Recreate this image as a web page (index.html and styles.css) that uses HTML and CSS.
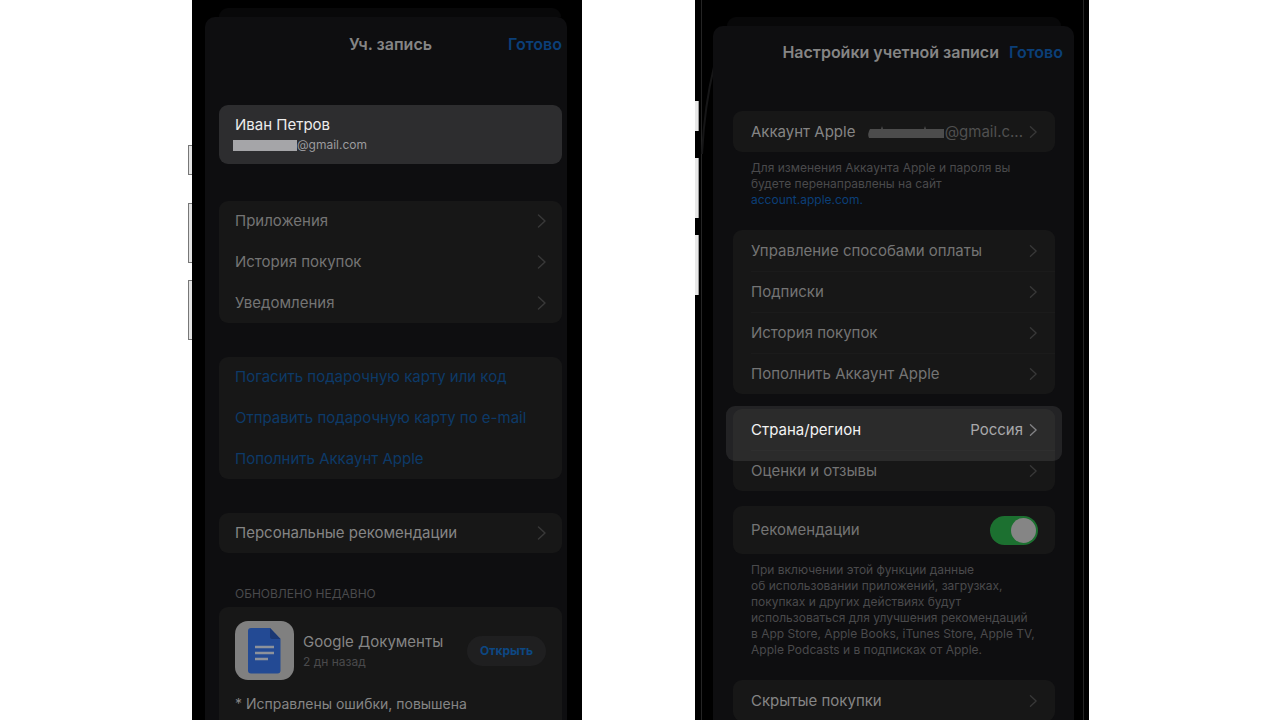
FILE: index.html
```html
<!DOCTYPE html>
<html lang="ru">
<head>
<meta charset="utf-8">
<meta name="viewport" content="width=device-width, initial-scale=1">
<title>Учетная запись</title>
<link rel="stylesheet" href="styles.css">
</head>
<body>
<svg class="defs" aria-hidden="true"><symbol id="chevron" viewBox="0 0 10 16"><path d="M1.500 2 8 8l-6.500 6" fill="none" stroke="currentColor" stroke-width="1.500" stroke-linecap="round" stroke-linejoin="round"/></symbol></svg>
<main class="stage">
  <section class="phone phone-account">
    <i class="side side-mute"></i><i class="side side-up"></i><i class="side side-down"></i>
    <div class="sheet-back"></div>
    <div class="sheet">
      <header class="bar">
        <h1 class="title">Уч. запись</h1>
        <button class="done">Готово</button>
      </header>
      <button class="profile">
        <span class="profile-name">Иван Петров</span>
        <span class="profile-mail"><i class="mask"></i>@gmail.com</span>
      </button>
      <div class="card">
        <button class="row"><span>Приложения</span><svg class="chev"><use href="#chevron"/></svg></button>
        <button class="row"><span>История покупок</span><svg class="chev"><use href="#chevron"/></svg></button>
        <button class="row"><span>Уведомления</span><svg class="chev"><use href="#chevron"/></svg></button>
      </div>
      <div class="card">
        <button class="row row-link">Погасить подарочную карту или код</button>
        <button class="row row-link">Отправить подарочную карту по e-mail</button>
        <button class="row row-link">Пополнить Аккаунт Apple</button>
      </div>
      <div class="card">
        <button class="row row-bright"><span>Персональные рекомендации</span><svg class="chev"><use href="#chevron"/></svg></button>
      </div>
      <h2 class="section">ОБНОВЛЕНО НЕДАВНО</h2>
      <div class="card card-update">
        <div class="app">
          <svg class="app-icon" viewBox="0 0 59 59" aria-hidden="true">
            <rect width="59" height="59" rx="13" fill="#808080"/>
            <path d="M16 7h19l10.500 11v31.500a3 3 0 0 1-3 3H16a3 3 0 0 1-3-3V10a3 3 0 0 1 3-3z" fill="#234a94"/>
            <path d="M35 7l10.500 11H37a2 2 0 0 1-2-2z" fill="#1b3874"/>
            <path d="M20 26h19M20 32h19M20 38h13" stroke="#8d929b" stroke-width="2.400"/>
          </svg>
          <div class="app-text">
            <span class="app-name">Google Документы</span>
            <span class="app-date">2 дн назад</span>
          </div>
          <button class="open">Открыть</button>
        </div>
        <p class="changes">* Исправлены ошибки, повышена</p>
      </div>
    </div>
  </section>

  <section class="phone phone-settings">
    <i class="side side-mute"></i><i class="side side-up"></i><i class="side side-down"></i>
    <svg class="glint" viewBox="0 0 14 90" aria-hidden="true"><path d="M13 1C7 25 3 50 1 88" fill="none" stroke="#161617" stroke-width="2"/></svg>
    <div class="sheet-back"></div>
    <div class="sheet">
      <header class="bar">
        <h1 class="title">Настройки учетной записи</h1>
        <button class="done">Готово</button>
      </header>
      <div class="card">
        <button class="row row-bright"><span>Аккаунт Apple</span><span class="value value-mail"><svg class="scribble" viewBox="0 0 78 14" aria-hidden="true"><path d="M3 4h11l1-3 1 3h41l1-3 1 3h18v9H2Q0 9 3 4z" fill="#4c4c4c"/></svg>@gmail.c...</span><svg class="chev"><use href="#chevron"/></svg></button>
      </div>
      <p class="note">Для изменения Аккаунта Apple и пароля вы<br>будете перенаправлены на сайт<br><a class="link" href="#account">account.apple.com.</a></p>
      <div class="card">
        <button class="row"><span>Управление способами оплаты</span><svg class="chev"><use href="#chevron"/></svg></button>
        <button class="row"><span>Подписки</span><svg class="chev"><use href="#chevron"/></svg></button>
        <button class="row"><span>История покупок</span><svg class="chev"><use href="#chevron"/></svg></button>
        <button class="row"><span>Пополнить Аккаунт Apple</span><svg class="chev"><use href="#chevron"/></svg></button>
      </div>
      <div class="card">
        <button class="row row-active"><span>Страна/регион</span><span class="value">Россия</span><svg class="chev"><use href="#chevron"/></svg></button>
        <button class="row"><span>Оценки и отзывы</span><svg class="chev"><use href="#chevron"/></svg></button>
      </div>
      <div class="card">
        <label class="row row-toggle" for="rec"><span>Рекомендации</span><input class="toggle" id="rec" type="checkbox" checked></label>
      </div>
      <p class="note">При включении этой функции данные<br>об использовании приложений, загрузках,<br>покупках и других действиях будут<br>использоваться для улучшения рекомендаций<br>в App Store, Apple Books, iTunes Store, Apple TV,<br>Apple Podcasts и в подписках от Apple.</p>
      <div class="card">
        <button class="row row-bright"><span>Скрытые покупки</span><svg class="chev"><use href="#chevron"/></svg></button>
      </div>
    </div>
  </section>
</main>
</body>
</html>
```

FILE: styles.css
```css
* { box-sizing: border-box; }

body {
  margin: 0;
  background: #fff;
  color: #747474;
  font-family: Inter, "Liberation Sans", sans-serif;
  font-size: 15px;
}

button {
  border: 0;
  padding: 0;
  background: none;
  color: inherit;
  font: inherit;
  text-align: left;
  cursor: pointer;
}

.defs { position: absolute; width: 0; height: 0; }

.stage {
  display: grid;
  grid-template-columns: 192fr 390fr 113fr 394fr 191fr;
  height: 100vh;
  overflow: hidden;
}

.phone {
  position: relative;
  display: flex;
  flex-direction: column;
  background: #000;
}

.phone-account { grid-column: 2; padding: 8px 15px 0 13px; }
.phone-settings { grid-column: 4; padding: 17px 15px 0 18px; }

.phone-settings::before {
  content: "";
  position: absolute;
  inset: 0 5px 0 6px;
  border: solid #242424;
  border-width: 0 1px;
}

.side {
  position: absolute;
  left: -4px;
  width: 4px;
  background: #e4e4e4;
  border: 1px solid #777;
  border-right: 0;
}

.side-mute { top: 145px; height: 30px; }
.side-up { top: 203px; height: 60px; }
.side-down { top: 280px; height: 60px; }

.phone-settings .side { left: 0; background: #e8e8e8; border: 0; border-right: 1px solid #999; }
.phone-settings .side-mute { top: 101px; }
.phone-settings .side-up { top: 158px; }
.phone-settings .side-down { top: 235px; }

.glint { position: absolute; left: 6px; top: 66px; width: 14px; height: 90px; }

.sheet-back {
  height: 9px;
  margin: 0 6px 0 14px;
  border-radius: 9px 9px 0 0;
  background: #080809;
}

.sheet {
  position: relative;
  flex: 1;
  border-radius: 10px 10px 0 0;
  background: #0e0e10;
}

.phone-account .sheet { padding: 0 5px 0 14px; }
.phone-settings .sheet { padding: 0 19px 0 20px; }
.phone-settings .sheet-back { margin: 0 13px 0 14px; }

.bar {
  display: grid;
  grid-template-columns: 1fr auto 1fr;
  align-items: center;
  height: 54px;
}

.title {
  grid-column: 2;
  margin: 0;
  color: #858585;
  font-size: 16px;
  font-weight: 600;
  line-height: 20px;
}

.done {
  justify-self: end;
  color: #0b3f78;
  font-size: 16px;
  font-weight: 600;
}

.phone-settings .bar {
  grid-template-columns: 1fr auto auto;
  gap: 10px;
  height: 52px;
  margin: 0 -8px 33px 0;
}

.profile {
  display: flex;
  flex-direction: column;
  justify-content: center;
  gap: 1px;
  width: 100%;
  height: 59px;
  margin: 34px 0 37px;
  padding: 0 16px;
  border-radius: 9px;
  background: #2d2d2f;
}

.profile-name { color: #ececec; line-height: 20px; }

.profile-mail {
  display: flex;
  align-items: center;
  color: #9b9b9e;
  font-size: 12px;
  line-height: 18px;
}

.mask { width: 64px; height: 11px; margin-left: -2px; background: #a5a5a8; }

.card {
  margin-bottom: 34px;
  border-radius: 9px;
  background: #171717;
}

.phone-settings .card { margin-bottom: 15px; }

.row {
  position: relative;
  display: flex;
  align-items: center;
  width: 100%;
  height: 40px;
  padding: 0 15px 0 16px;
  line-height: 20px;
  white-space: nowrap;
}

.row + .row { height: 41px; }

.phone-settings .row { height: 41px; padding: 0 17px 0 18px; }

.phone-settings .row + .row::before {
  content: "";
  position: absolute;
  inset: 0 0 auto 18px;
  height: 1px;
  background: #1b1b1b;
}

.row-link { color: #0d3a68; }
.row-bright { color: #858585; }

.chev { width: 10px; height: 16px; margin-left: auto; color: #383838; }
.phone-settings .chev { width: 9px; height: 14px; }

.value { margin-left: auto; color: #a0a0a3; }
.value + .chev { margin-left: 6px; }
.value-mail { display: flex; align-items: center; color: #505050; }
.scribble { width: 78px; height: 14px; }

.row-active { color: #f2f2f2; }
.phone-settings .row-active .chev { color: #77777a; }

.row-active::after {
  content: "";
  position: absolute;
  z-index: 1;
  inset: -3px -7px -11px;
  border-radius: 9px;
  background: rgba(255, 255, 255, .09);
  pointer-events: none;
}

.phone-settings .row-toggle { height: 48px; }

.toggle {
  appearance: none;
  width: 48px;
  height: 29px;
  margin: 0 0 0 auto;
  padding: 2px;
  border-radius: 15px;
  background: #1c7030;
}

.toggle::before {
  content: "";
  display: block;
  width: 25px;
  height: 25px;
  margin-left: 19px;
  border-radius: 50%;
  background: #858585;
}

.note {
  margin: -7px 0 22px;
  padding-left: 18px;
  color: #4a4a4c;
  font-size: 12px;
  line-height: 16px;
  white-space: nowrap;
}

.link { color: #0b3f78; text-decoration: none; }

.section {
  margin: -2px 0 4px 16px;
  color: #4a4a4c;
  font-size: 12px;
  font-weight: 400;
  line-height: 18px;
}

.card-update { padding: 14px 16px; }
.app { display: flex; align-items: center; }
.app-icon { width: 59px; height: 59px; }

.app-text { display: flex; flex-direction: column; margin-left: 9px; white-space: nowrap; }
.app-name { color: #858585; line-height: 22px; }
.app-date { color: #4a4a4c; font-size: 12px; line-height: 18px; }

.open {
  width: 79px;
  height: 30px;
  margin-left: auto;
  border-radius: 15px;
  background: #1f1f20;
  color: #0d4782;
  font-size: 12px;
  font-weight: 700;
  text-align: center;
}

.changes { margin: 14px 0 0; color: #858585; font-size: 14px; line-height: 20px; }
```
